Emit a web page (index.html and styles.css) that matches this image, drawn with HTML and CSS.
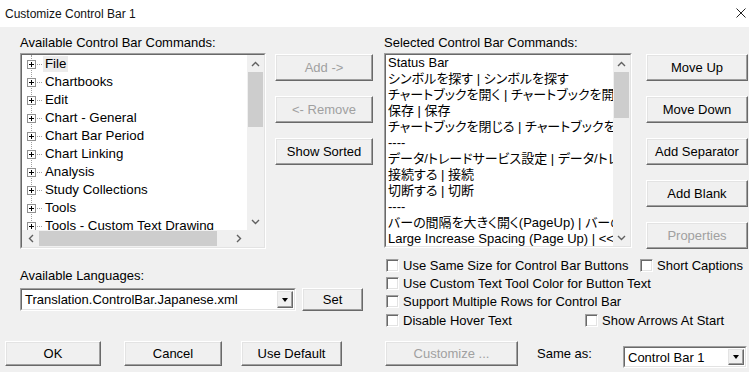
FILE: index.html
```html
<!DOCTYPE html>
<html lang="en">
<head>
    <meta charset="UTF-8">
    <title>Customize Control Bar 1</title>
    <link rel="stylesheet" href="styles.css">
</head>
<body>
<div class="window">
    <div class="titlebar">
        <span>Customize Control Bar 1</span>
        <svg class="close" width="10" height="10" viewBox="0 0 10 10"><path d="M0.5 0.5L9.5 9.5M9.5 0.5L0.5 9.5" stroke="#222" stroke-width="1"/></svg>
    </div>

    <div class="dialog">
        <div class="top">
            <div class="col-avail">
                <div class="label">Available Control Bar Commands:</div>
                <div class="sunken listbox">
                    <div class="inner grid2">
                        <div class="items">
                            <ul class="tree">
                                <li><span class="plus"></span><span class="stub"></span><span class="txt focus">File</span></li>
                                <li><span class="plus"></span><span class="stub"></span><span class="txt">Chartbooks</span></li>
                                <li><span class="plus"></span><span class="stub"></span><span class="txt">Edit</span></li>
                                <li><span class="plus"></span><span class="stub"></span><span class="txt">Chart - General</span></li>
                                <li><span class="plus"></span><span class="stub"></span><span class="txt">Chart Bar Period</span></li>
                                <li><span class="plus"></span><span class="stub"></span><span class="txt">Chart Linking</span></li>
                                <li><span class="plus"></span><span class="stub"></span><span class="txt">Analysis</span></li>
                                <li><span class="plus"></span><span class="stub"></span><span class="txt">Study Collections</span></li>
                                <li><span class="plus"></span><span class="stub"></span><span class="txt">Tools</span></li>
                                <li><span class="plus"></span><span class="stub"></span><span class="txt">Tools - Custom Text Drawing</span></li>
                            </ul>
                        </div>
                        <div class="vscroll">
                            <div class="arrow"><svg width="9" height="6" viewBox="0 0 9 6"><path d="M1 5L4.5 1.5L8 5" fill="none" stroke="#606060" stroke-width="1.4"/></svg></div>
                            <div class="track"><div class="thumb" style="height: 55px"></div></div>
                            <div class="arrow"><svg width="9" height="6" viewBox="0 0 9 6"><path d="M1 1L4.5 4.5L8 1" fill="none" stroke="#606060" stroke-width="1.4"/></svg></div>
                        </div>
                        <div class="hscroll">
                            <div class="arrow"><svg width="6" height="9" viewBox="0 0 6 9"><path d="M5 1L1.5 4.5L5 8" fill="none" stroke="#606060" stroke-width="1.4"/></svg></div>
                            <div class="track"><div class="thumb" style="width: 178px"></div></div>
                            <div class="arrow"><svg width="6" height="9" viewBox="0 0 6 9"><path d="M1 1L4.5 4.5L1 8" fill="none" stroke="#606060" stroke-width="1.4"/></svg></div>
                        </div>
                        <div class="corner"></div>
                    </div>
                </div>
            </div>

            <div class="col-mid">
                <button class="btn" disabled>Add -&gt;</button>
                <button class="btn" disabled>&lt;- Remove</button>
                <button class="btn">Show Sorted</button>
            </div>

            <div class="col-sel">
                <div class="label">Selected Control Bar Commands:</div>
                <div class="sunken listbox sel">
                    <div class="inner grid1">
                        <ul class="items plain">
                            <li>Status Bar</li>
                            <li>シンボルを探す | シンボルを探す</li>
                            <li>チャートブックを開く | チャートブックを開く</li>
                            <li>保存 | 保存</li>
                            <li>チャートブックを閉じる | チャートブックを閉じる</li>
                            <li>----</li>
                            <li>データ/トレードサービス設定 | データ/トレードサービス設定</li>
                            <li>接続する | 接続</li>
                            <li>切断する | 切断</li>
                            <li>----</li>
                            <li>バーの間隔を大きく開く(PageUp) | バーの間隔を大きく開く</li>
                            <li>Large Increase Spacing (Page Up) | &lt;&lt;</li>
                            <li>バーの間隔を小さく開く(PageDown) | バーの間隔</li>
                        </ul>
                        <div class="vscroll">
                            <div class="arrow"><svg width="9" height="6" viewBox="0 0 9 6"><path d="M1 5L4.5 1.5L8 5" fill="none" stroke="#606060" stroke-width="1.4"/></svg></div>
                            <div class="track"><div class="thumb" style="height: 46px"></div></div>
                            <div class="arrow"><svg width="9" height="6" viewBox="0 0 9 6"><path d="M1 1L4.5 4.5L8 1" fill="none" stroke="#606060" stroke-width="1.4"/></svg></div>
                        </div>
                    </div>
                </div>
            </div>

            <div class="col-btns">
                <button class="btn">Move Up</button>
                <button class="btn">Move Down</button>
                <button class="btn">Add Separator</button>
                <button class="btn">Add Blank</button>
                <button class="btn" disabled>Properties</button>
            </div>
        </div>

        <div class="middle">
            <div class="lang">
                <div class="label lang-label">Available Languages:</div>
                <div class="lang-row">
                    <div class="sunken combo lang-combo">
                        <div class="inner combo-inner">
                            <span class="combo-text">Translation.ControlBar.Japanese.xml</span>
                            <span class="drop"><span class="tri"></span></span>
                        </div>
                    </div>
                    <button class="btn set">Set</button>
                </div>
            </div>

            <div class="options">
                <div class="opt-row">
                    <label class="check w-same"><span class="box"></span>Use Same Size for Control Bar Buttons</label>
                    <label class="check"><span class="box"></span>Short Captions</label>
                </div>
                <div class="opt-row">
                    <label class="check"><span class="box"></span>Use Custom Text Tool Color for Button Text</label>
                </div>
                <div class="opt-row">
                    <label class="check"><span class="box"></span>Support Multiple Rows for Control Bar</label>
                </div>
                <div class="opt-row last">
                    <label class="check w-hover"><span class="box"></span>Disable Hover Text</label>
                    <label class="check"><span class="box"></span>Show Arrows At Start</label>
                </div>
            </div>
        </div>

        <div class="bottom">
            <button class="btn b-ok">OK</button>
            <button class="btn b-cancel">Cancel</button>
            <button class="btn b-default">Use Default</button>
            <button class="btn b-custom" disabled>Customize ...</button>
            <span class="same-as">Same as:</span>
            <div class="sunken combo bar-combo">
                <div class="inner combo-inner">
                    <span class="combo-text">Control Bar 1</span>
                    <span class="drop"><span class="tri"></span></span>
                </div>
            </div>
        </div>
    </div>
</div>
</body>
</html>
```

FILE: styles.css
```css
body {
    margin: 0;
    font-family: "Liberation Sans", "Noto Sans CJK JP", sans-serif;
    font-size: 13px;
    color: #000;
    background-color: #f0f0f0;
}
.window {
    width: 749px;
    height: 372px;
    overflow: hidden;
}
.titlebar {
    height: 27px;
    background-color: #fff;
    display: flex;
    align-items: center;
    justify-content: space-between;
    padding: 0 3px 0 5px;
    font-size: 12px;
    color: #111;
}
.close {
    margin-top: -2px;
}
.dialog {
    height: 345px;
}

/* top part: two lists with their buttons */
.top {
    display: flex;
    padding-left: 20px;
    height: 222px;
}
.label {
    line-height: 16px;
    height: 16px;
    white-space: nowrap;
}
.col-avail {
    width: 246px;
    padding-top: 8px;
}
.col-avail .label,
.col-sel .label {
    margin-bottom: 2px;
}
.col-mid {
    width: 98px;
    margin-left: 9px;
    padding-top: 27px;
    display: flex;
    flex-direction: column;
    gap: 15px;
}
.col-sel {
    width: 248px;
    margin-left: 11px;
    padding-top: 8px;
}
.col-btns {
    width: 102px;
    margin-left: 14px;
    padding-top: 27px;
    display: flex;
    flex-direction: column;
    gap: 15px;
}

/* classic 3d buttons */
.btn {
    box-sizing: border-box;
    height: 27px;
    width: 100%;
    padding: 0;
    font: inherit;
    color: #000;
    background-color: #f0f0f0;
    border: 1px solid;
    border-color: #fff #696969 #696969 #fff;
    box-shadow: inset -1px -1px #a0a0a0, inset 1px 1px #e3e3e3;
}
.btn:disabled {
    color: #a0a0a0;
}

/* sunken frames */
.sunken {
    box-sizing: border-box;
    border: 1px solid;
    border-color: #a0a0a0 #fff #fff #a0a0a0;
    background-color: #fff;
}
.inner {
    box-sizing: border-box;
    height: 100%;
    overflow: hidden;
    border: 1px solid;
    border-color: #696969 #e3e3e3 #e3e3e3 #696969;
}
.listbox {
    height: 196px;
}
.listbox.sel {
    height: 195px;
}
.grid2 {
    display: grid;
    grid-template-columns: minmax(0, 1fr) 17px;
    grid-template-rows: minmax(0, 1fr) 17px;
}
.grid1 {
    display: grid;
    grid-template-columns: minmax(0, 1fr) 17px;
    grid-template-rows: minmax(0, 1fr);
}
.items {
    overflow: hidden;
    min-width: 0;
    min-height: 0;
}

/* tree */
.tree {
    list-style: none;
    margin: 0 0 0 9px;
    padding: 0;
    border-left: 1px dotted #a0a0a0;
}
.tree li {
    display: flex;
    align-items: center;
    height: 18px;
    white-space: nowrap;
    font-size: 13.3px;
}
.plus {
    flex: none;
    box-sizing: border-box;
    width: 9px;
    height: 9px;
    margin-left: -5px;
    border: 1px solid #919191;
    background:
        linear-gradient(#000, #000) center / 5px 1px no-repeat,
        linear-gradient(#000, #000) center / 1px 5px no-repeat,
        #fff;
}
.stub {
    flex: none;
    width: 5px;
    margin-left: 1px;
    border-top: 1px dotted #a0a0a0;
}
.txt {
    padding: 0 2px;
    margin-left: 1px;
    line-height: 16px;
}
.txt.focus {
    background-color: #ececec;
}

/* plain list */
.plain {
    list-style: none;
    margin: 0;
    padding: 0 0 0 2px;
    font-feature-settings: "palt";
}
.plain li {
    height: 16px;
    line-height: 16px;
    white-space: nowrap;
}

/* scrollbars */
.vscroll {
    display: flex;
    flex-direction: column;
    min-height: 0;
    background-color: #f0f0f0;
}
.hscroll {
    display: flex;
    background-color: #f0f0f0;
}
.arrow {
    flex: none;
    width: 17px;
    height: 17px;
    display: flex;
    align-items: center;
    justify-content: center;
}
.track {
    flex: 1;
    display: flex;
}
.vscroll .track {
    flex-direction: column;
}
.thumb {
    background-color: #cdcdcd;
}
.vscroll .thumb {
    margin: 0 1px;
}
.hscroll .thumb {
    margin: 1px 0;
}
.corner {
    background-color: #f0f0f0;
}

/* middle: languages and options */
.middle {
    display: flex;
    align-items: flex-start;
    height: 87px;
}
.lang {
    width: 344px;
    padding-left: 20px;
}
.lang-label {
    margin-top: 19px;
    margin-bottom: 4px;
}
.lang-row {
    display: flex;
    gap: 6px;
}
.combo {
    height: 23px;
}
.lang-combo {
    width: 276px;
}
.combo-inner {
    display: flex;
    align-items: center;
    padding: 1px;
}
.combo-text {
    flex: 1;
    padding-left: 2px;
    white-space: nowrap;
    overflow: hidden;
}
.drop {
    flex: none;
    box-sizing: border-box;
    width: 16px;
    height: 100%;
    display: flex;
    align-items: center;
    justify-content: center;
    background-color: #f0f0f0;
    border: 1px solid;
    border-color: #e3e3e3 #696969 #696969 #e3e3e3;
    box-shadow: inset -1px -1px #a0a0a0;
}
.tri {
    width: 0;
    height: 0;
    border-left: 3.5px solid transparent;
    border-right: 3.5px solid transparent;
    border-top: 4px solid #000;
}
.set {
    width: 61px;
    height: 23px;
}
.options {
    margin-left: 20px;
    padding: 7px 0 0 2px;
}
.opt-row {
    display: flex;
    height: 18px;
    align-items: center;
}
.opt-row.last {
    margin-top: 1px;
}
.check {
    display: flex;
    align-items: center;
    white-space: nowrap;
}
.box {
    flex: none;
    box-sizing: border-box;
    width: 13px;
    height: 13px;
    margin-right: 4px;
    background-color: #fff;
    border: 1px solid;
    border-color: #a0a0a0 #fff #fff #a0a0a0;
    box-shadow: inset 1px 1px #696969, inset -1px -1px #e3e3e3;
}
.w-same {
    width: 254px;
}
.w-hover {
    width: 199px;
}

/* bottom buttons */
.bottom {
    display: flex;
    align-items: flex-start;
    padding: 5px 0 0 5px;
}
.bottom .btn {
    height: 25px;
}
.b-ok {
    width: 96px;
}
.b-cancel {
    width: 98px;
    margin-left: 23px;
}
.b-default {
    width: 101px;
    margin-left: 19px;
}
.b-custom {
    width: 133px;
    margin-left: 43px;
}
.same-as {
    margin-left: 19px;
    line-height: 25px;
    width: 86px;
}
.bar-combo {
    width: 124px;
    margin-top: 5px;
    height: 22px;
}
```
